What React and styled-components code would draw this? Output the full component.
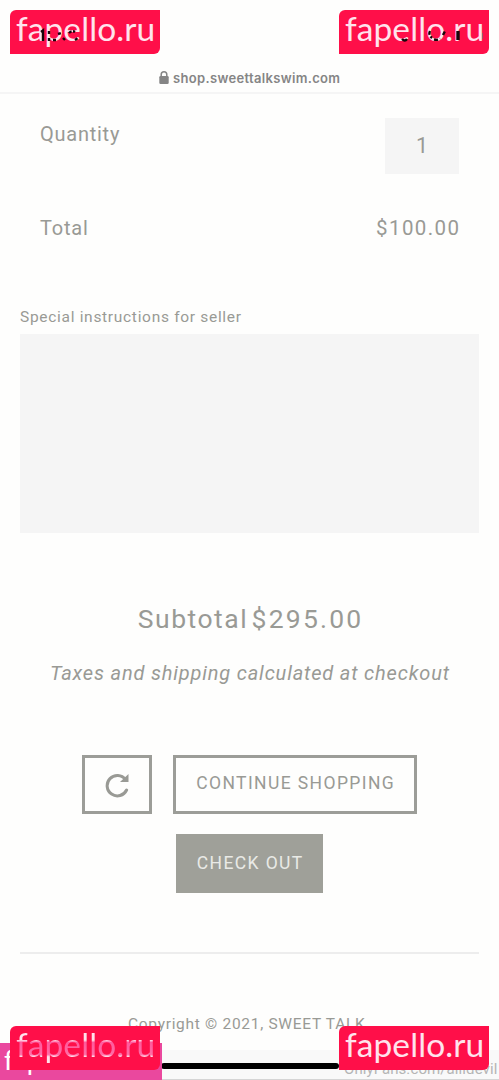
import React from 'react';
import styled, { createGlobalStyle } from 'styled-components';

const Global = createGlobalStyle`
  * { box-sizing: border-box; }
  body { margin: 0; background: #fefefd; }
`;
const Page = styled.div`
  position: relative;
  width: 499px;
  height: 1080px;
  overflow: hidden;
  background: #fefefd;
  color: #999a95;
  font-family: Roboto, sans-serif;
  display: flex;
  flex-direction: column;
`;
const Text = styled.span`
  white-space: nowrap;
  font-size: ${(p) => p.$size}px;
  line-height: ${(p) => p.$line || 24}px;
  letter-spacing: ${(p) => p.$track || 0}px;
  margin-right: -${(p) => p.$track || 0}px;
  font-style: ${(p) => (p.$italic ? 'italic' : 'normal')};
`;
const AddressBar = styled.header`
  height: 94px;
  flex: none;
  padding: 69px 0 0 159px;
  border-bottom: 2px solid #f5f5f5;
  display: flex;
  gap: 4px;
  align-items: flex-start;
  color: #858585;
`;
const LockIcon = styled.svg`
  margin-top: 1px;
`;
const Domain = styled.span`
  font: 600 13px/19px Inter, sans-serif;
  letter-spacing: 0.33px;
  white-space: nowrap;
`;
const Row = styled.div`
  display: flex;
  justify-content: space-between;
  align-items: flex-start;
  padding: ${(p) => p.$top || 0}px 40px 0;
  height: ${(p) => p.$height}px;
  flex: none;
`;
const RowLabel = styled.div`
  padding-top: 4px;
  display: flex;
`;
const QuantityBox = styled.div`
  width: 74px;
  height: 56px;
  display: flex;
  align-items: center;
  justify-content: center;
  background: #f5f5f5;
`;
const Note = styled.section`
  padding: 0 20px;
  display: flex;
  flex-direction: column;
  height: 301px;
  flex: none;
`;
const NoteArea = styled.div`
  height: 199px;
  margin-top: 5px;
  background: #f5f5f5;
`;
const Summary = styled.section`
  display: flex;
  flex-direction: column;
  align-items: center;
  height: 149px;
  gap: 28px;
  flex: none;
`;
const SubtotalLine = styled.div`
  display: flex;
  gap: 5px;
  margin-top: -1px;
`;
const Actions = styled.section`
  display: flex;
  flex-wrap: wrap;
  justify-content: center;
  align-content: flex-start;
  gap: 20px 21px;
  height: 197px;
  padding: 0 60px;
  flex: none;
`;
const Button = styled.div`
  height: 59px;
  width: ${(p) => p.$width}px;
  padding-bottom: ${(p) => p.$lift || 0}px;
  border: ${(p) => (p.$solid ? 'none' : '3px solid #9c9d98')};
  background: ${(p) => (p.$solid ? '#9fa099' : 'transparent')};
  color: ${(p) => (p.$solid ? '#e9eae6' : '#999a95')};
  display: flex;
  align-items: center;
  justify-content: center;
`;
const Footer = styled.footer`
  margin: 0 20px;
  border-top: 2px solid #ededed;
  padding: 58px 0 0 108px;
`;
const HomeArea = styled.div`
  position: absolute;
  left: 0;
  right: 0;
  top: 1050px;
  height: 30px;
  background: #f9f9f9;
  border-bottom: 1px solid #d5d5d5;
`;
const HomeBar = styled.div`
  position: absolute;
  left: 161px;
  top: 1063px;
  width: 178px;
  height: 6px;
  border-radius: 3px;
  background: #000;
`;
const Credit = styled.span`
  position: absolute;
  left: 344px;
  top: 1059px;
  font: 15px/20px Roboto, sans-serif;
  letter-spacing: 0.1px;
  color: #b5b5b5;
  white-space: nowrap;
`;
const Badge = styled.div`
  position: absolute;
  left: ${(p) => p.$x}px;
  top: ${(p) => p.$y}px;
  width: 150px;
  height: 44px;
  padding-left: 6px;
  border-radius: 6px 0 6px 0;
  background: #ff0f49;
  color: #ffe3ec;
  font: 33.5px/37px Lato, sans-serif;
  letter-spacing: 0.1px;
  white-space: nowrap;
`;
const TintedText = styled.span`
  background: linear-gradient(#ffe3ec 40%, #ff5a9c 46%, #ff6ca6 76%, #ffe3ec 82%);
  background-clip: text;
  color: transparent;
`;
const PinkTag = styled.div`
  position: absolute;
  left: 0;
  top: 1043px;
  width: 162px;
  height: 37px;
  padding-left: 4px;
  background: #ea489e;
  color: #fff;
  font: 27px/34px Lato, sans-serif;
`;
const StatusMarks = styled.svg`
  position: absolute;
  left: 0;
  top: 0;
`;

export default function App() {
  return (
    <Page>
      <Global />
      <AddressBar>
        <LockIcon width="10" height="15" viewBox="0 0 10 15">
          <path d="M2.2 7V4.5a2.8 2.8 0 0 1 5.6 0V7" fill="none" stroke="#858585" strokeWidth="1.5" />
          <rect x="0.3" y="6" width="9.4" height="8" rx="1.3" fill="#858585" />
        </LockIcon>
        <Domain>shop.sweettalkswim.com</Domain>
      </AddressBar>
      <Row $top={24} $height={122}>
        <RowLabel><Text $size={20} $track={0.75}>Quantity</Text></RowLabel>
        <QuantityBox><Text $size={21.5}>1</Text></QuantityBox>
      </Row>
      <Row $height={89}>
        <Text $size={20} $track={0.8}>Total</Text>
        <Text $size={20.5} $track={1.4}>$100.00</Text>
      </Row>
      <Note>
        <Text $size={15.5} $track={0.7}>Special instructions for seller</Text>
        <NoteArea />
      </Note>
      <Summary>
        <SubtotalLine>
          <Text $size={26.5} $track={1.5} $line={28}>Subtotal</Text>
          <Text $size={26.5} $track={2.2} $line={28}>$295.00</Text>
        </SubtotalLine>
        <Text $size={20} $track={0.82} $italic>Taxes and shipping calculated at checkout</Text>
      </Summary>
      <Actions>
        <Button $width={70}>
          <svg width="26" height="26" viewBox="0 0 26 26" fill="none" stroke="#999a95" strokeWidth="3">
            <path d="M22.6 18A10.2 10.2 0 1 1 21.5 7.5" strokeLinecap="round" />
            <path d="M24.5 2v8h-8.5z" fill="#999a95" stroke="none" />
          </svg>
        </Button>
        <Button $width={244} $lift={4}><Text $size={17.5} $track={1.4}>CONTINUE SHOPPING</Text></Button>
        <Button $width={147} $solid $lift={2}><Text $size={17.5} $track={1.4}>CHECK OUT</Text></Button>
      </Actions>
      <Footer><Text $size={15.5} $track={0.7}>Copyright © 2021, SWEET TALK</Text></Footer>
      <HomeArea />
      <HomeBar />
      <Credit>OnlyFans.com/allidevil</Credit>
      <PinkTag>fapello.ru</PinkTag>
      <Badge $x={10} $y={10}>fapello.ru</Badge>
      <Badge $x={339} $y={10}>fapello.ru</Badge>
      <Badge $x={10} $y={1026}><TintedText>fapello.ru</TintedText></Badge>
      <Badge $x={339} $y={1026}>fapello.ru</Badge>
      <StatusMarks width="499" height="56" fill="none" stroke="#16050a" strokeWidth="2.4">
        <path d="M41 32l2-1.5V41" />
        <path d="M49 31v3M49 38v3M53 40h4M58 34l3-1M63 38l2 2M69 33q3-3 6-1M75 40l3-2" strokeDasharray="3 1.5" />
        <path d="M402 39q3 3 5 0" />
        <path d="M430 31q-2 4 2 7M434 39.5q4 1 6-1M443 35l2-4" strokeDasharray="4 2" />
        <path d="M458 31v9" strokeWidth="3.4" />
        <path d="M482.5 33v6" strokeWidth="1" stroke="#96566a" />
      </StatusMarks>
    </Page>
  );
}
